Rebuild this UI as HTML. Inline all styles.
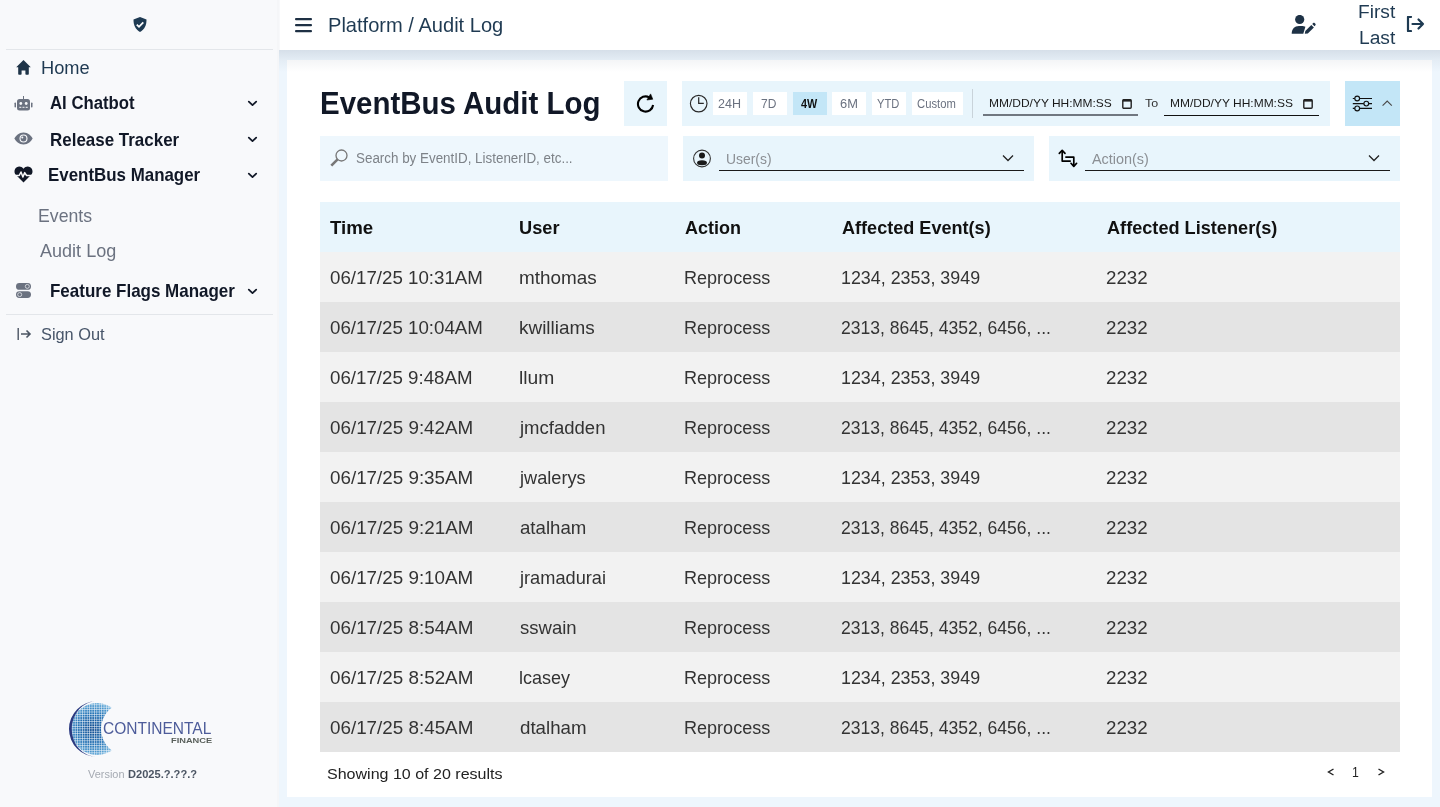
<!DOCTYPE html>
<html><head><meta charset="utf-8">
<style>
*{box-sizing:border-box;margin:0;padding:0}
html,body{width:1440px;height:807px;overflow:hidden}
body{font-family:"Liberation Sans",sans-serif;background:#eef6fd;position:relative}
.abs{position:absolute}
.t{position:absolute;white-space:nowrap;line-height:1;transform-origin:0 0}
#sb{position:absolute;left:0;top:0;width:279px;height:807px;background:#f8f9fb}
.hr{position:absolute;left:6px;width:267px;height:1px;background:#e3e6ea}
#hd{position:absolute;left:280px;top:0;width:1160px;height:50px;background:#fff}
#shadow{position:absolute;left:279px;top:50px;width:1161px;height:12px;background:linear-gradient(#d5dde6,#eef3f9)}
#card{position:absolute;left:287px;top:60px;width:1145px;height:737px;background:#fff}
.box{position:absolute;background:#e8f5fc}
.chip{position:absolute;top:92px;height:23px;background:#fff}
.row{position:absolute;left:320px;width:1080px;height:50px}
</style></head><body>
<div id="sb">
  <svg class="abs" style="left:132px;top:16px" width="16" height="17" viewBox="0 0 16 17"><path d="M8 1 L14.5 3.5 C14.5 9.5 12.5 13.5 8 16 C3.5 13.5 1.5 9.5 1.5 3.5 Z" fill="#1e3a52"/><path d="M4.8 8.6 L7 10.8 L11.3 6.3" stroke="#fff" stroke-width="1.8" fill="none"/></svg>
  <div class="hr" style="top:49px"></div>
  <svg class="abs" style="left:16px;top:60px" width="16" height="15" viewBox="0 0 16 15"><path d="M7.5 0 L14.8 7.3 L12.8 7.3 L12.8 14 Q12.8 14.8 12 14.8 L10.2 14.8 Q9.4 14.8 9.4 14 L9.4 10.6 L5.6 10.6 L5.6 14 Q5.6 14.8 4.8 14.8 L3 14.8 Q2.2 14.8 2.2 14 L2.2 7.3 L0.2 7.3 Z" fill="#1e3448"/></svg>
  <svg class="abs" style="left:14px;top:96px" width="19" height="15" viewBox="0 0 19 15"><rect x="3" y="3" width="13" height="11.5" rx="2.5" fill="#6b7280"/><rect x="9" y="0" width="1" height="3" fill="#6b7280"/><rect x="0.5" y="6.5" width="1.5" height="5" rx=".7" fill="#6b7280"/><rect x="17" y="6.5" width="1.5" height="5" rx=".7" fill="#6b7280"/><circle cx="6.8" cy="7.5" r="1.4" fill="#f8f9fb"/><circle cx="12.2" cy="7.5" r="1.4" fill="#f8f9fb"/><rect x="5.3" y="10.8" width="2" height="1" fill="#f8f9fb"/><rect x="8.5" y="10.8" width="2" height="1" fill="#f8f9fb"/><rect x="11.7" y="10.8" width="2" height="1" fill="#f8f9fb"/></svg>
  <svg class="abs" style="left:14px;top:132px" width="19" height="13" viewBox="0 0 19 13"><path d="M9.5 0.5 C14 0.5 17.5 3.8 18.5 6.5 C17.5 9.2 14 12.5 9.5 12.5 C5 12.5 1.5 9.2 0.5 6.5 C1.5 3.8 5 0.5 9.5 0.5 Z" fill="#6b7280"/><circle cx="9.5" cy="6.5" r="4" fill="#f8f9fb"/><circle cx="9.5" cy="6.5" r="2.9" fill="#6b7280"/><circle cx="8.3" cy="5.4" r="1" fill="#f8f9fb"/></svg>
  <svg class="abs" style="left:14px;top:166px" width="19" height="17" viewBox="0 0 19 17"><path d="M9.5 16.5 L1.8 8.8 C-0.3 6.7 0.2 2.6 2.8 1.2 C5.2 -0.2 7.8 0.6 9.5 2.8 C11.2 0.6 13.8 -0.2 16.2 1.2 C18.8 2.6 19.3 6.7 17.2 8.8 Z" fill="#111827"/><path d="M1 9.5 L5.2 9.5 L7 6 L8.9 11 L10.7 6.6 L12.6 9.5 L18.5 9.5" stroke="#f8f9fb" stroke-width="1.5" fill="none" stroke-linejoin="round"/></svg>
  <svg class="abs" style="left:16px;top:283px" width="15" height="15" viewBox="0 0 15 15"><rect x="0" y="0" width="15" height="6.8" rx="3.4" fill="#6b7280"/><rect x="0" y="8.2" width="15" height="6.8" rx="3.4" fill="#6b7280"/><circle cx="11.3" cy="3.4" r="2" fill="none" stroke="#e5e7eb" stroke-width=".8"/><circle cx="3.7" cy="11.6" r="2" fill="none" stroke="#e5e7eb" stroke-width=".8"/></svg>
  <svg class="abs" style="left:247px;top:99px" width="12" height="9" viewBox="0 0 12 9"><path d="M1.8 2.6 L5.5 6.2 L9.2 2.6" stroke="#111827" stroke-width="1.75" fill="none" stroke-linecap="round" stroke-linejoin="round"/></svg>
  <svg class="abs" style="left:247px;top:135px" width="12" height="9" viewBox="0 0 12 9"><path d="M1.8 2.6 L5.5 6.2 L9.2 2.6" stroke="#111827" stroke-width="1.75" fill="none" stroke-linecap="round" stroke-linejoin="round"/></svg>
  <svg class="abs" style="left:247px;top:171px" width="12" height="9" viewBox="0 0 12 9"><path d="M1.8 2.6 L5.5 6.2 L9.2 2.6" stroke="#111827" stroke-width="1.75" fill="none" stroke-linecap="round" stroke-linejoin="round"/></svg>
  <svg class="abs" style="left:247px;top:287px" width="12" height="9" viewBox="0 0 12 9"><path d="M1.8 2.6 L5.5 6.2 L9.2 2.6" stroke="#111827" stroke-width="1.75" fill="none" stroke-linecap="round" stroke-linejoin="round"/></svg>
  <div class="hr" style="top:314px"></div>
  <svg class="abs" style="left:17px;top:328px" width="15" height="12" viewBox="0 0 15 12"><rect x="0.5" y="0" width="1.4" height="12" fill="#4b5563"/><path d="M4 6 L13 6 M9.5 2.5 L13 6 L9.5 9.5" stroke="#4b5563" stroke-width="1.6" fill="none"/></svg>
  <svg class="abs" style="left:66px;top:698px" width="60" height="62" viewBox="0 0 60 62">
    <defs>
      <radialGradient id="lg" cx="0.42" cy="0.5" r="0.6"><stop offset="0" stop-color="#0f4a8e"/><stop offset="0.5" stop-color="#2574b6"/><stop offset="0.8" stop-color="#5aa3d4"/><stop offset="1" stop-color="#b0d8ef"/></radialGradient>
      <pattern id="mesh" width="2.4" height="2.4" patternUnits="userSpaceOnUse"><rect width="1.9" height="1.9" fill="#fff"/></pattern>
      <mask id="bite"><rect width="60" height="62" fill="#fff"/><circle cx="62" cy="31" r="27" fill="#000"/></mask>
      <mask id="dots"><rect width="60" height="62" fill="url(#mesh)"/></mask>
    </defs>
    <g mask="url(#bite)"><circle cx="31" cy="31" r="26" fill="url(#lg)" mask="url(#dots)"/></g>
    <path d="M31 3 A28 28 0 0 0 31 59 A25.3 28 0 0 1 31 3 Z" fill="#2b3a80"/>
  </svg>
</div>

<div class="abs" style="left:279px;top:0;width:1px;height:50px;background:#f8f9fb"></div>
<div class="abs" style="left:277px;top:0;width:2px;height:807px;background:#f5f6f8"></div>
<div id="hd">
  <svg class="abs" style="left:15px;top:17px" width="18" height="16" viewBox="0 0 18 16"><rect x="0" y="1" width="17" height="2.2" rx="1" fill="#1e3044"/><rect x="0" y="7" width="17" height="2.2" rx="1" fill="#1e3044"/><rect x="0" y="13" width="17" height="2.2" rx="1" fill="#1e3044"/></svg>
  <svg class="abs" style="left:1011px;top:15px" width="26" height="20" viewBox="0 0 26 20"><circle cx="8.7" cy="4.5" r="4.6" fill="#1e3246"/><path d="M0.7 18.8 C0.7 14 3.5 11 8 11 L10.5 11 C12 11 13.5 11.3 14.4 11.8 L12.3 18.8 Z" fill="#1e3246"/><path d="M13.8 18.8 L14.3 15.9 L20.3 9.9 L22.9 12.5 L16.8 18.5 Z" fill="#1e3246"/><path d="M21.2 9 L22.2 8 C22.6 7.6 23.2 7.6 23.6 8 L24.4 8.8 C24.8 9.2 24.8 9.8 24.4 10.2 L23.5 11.2 Z" fill="#1e3246"/></svg>
  <svg class="abs" style="left:1126px;top:16px" width="19" height="16" viewBox="0 0 19 16"><path d="M5 1 L2 1 L2 15 L5 15" stroke="#1e3a52" stroke-width="2.2" fill="none" stroke-linejoin="round" stroke-linecap="round"/><path d="M6.5 8 L17 8 M12.5 3.5 L17 8 L12.5 12.5" stroke="#1e3a52" stroke-width="2.2" fill="none" stroke-linecap="round" stroke-linejoin="round"/></svg>
</div>
<div id="card"></div>
<div class="abs" style="left:279px;top:50px;width:1161px;height:22px;background:linear-gradient(rgba(50,70,100,.13) 0px,rgba(50,70,100,.055) 10px,rgba(50,70,100,0) 22px)"></div>

<div class="box" style="left:624px;top:81px;width:43px;height:45px;background:#e8f5fc"></div>
<svg class="abs" style="left:635px;top:93px" width="20" height="20" viewBox="0 0 20 20"><path d="M18.1 12 A7.6 7.6 0 1 1 14.2 4.3" stroke="#000" stroke-width="2.1" fill="none"/><path d="M15.6 0.9 L17.8 6.2 L11.9 7 Z" fill="#000" stroke="#000" stroke-width=".6" stroke-linejoin="round"/></svg>

<div class="box" style="left:682px;top:81px;width:648px;height:45px"></div>
<svg class="abs" style="left:688px;top:93px" width="21" height="21" viewBox="0 0 21 21"><circle cx="10.7" cy="10.6" r="8.3" stroke="#2a2a2a" stroke-width="1.15" fill="none"/><path d="M10.7 4.3 L10.7 10.4 L15.8 10.4" stroke="#2a2a2a" stroke-width="1.25" fill="none"/></svg>
<div class="chip" style="left:713px;width:34px"></div>
<div class="chip" style="left:753px;width:34px"></div>
<div class="chip" style="left:793px;width:34px;background:#c3e6f7"></div>
<div class="chip" style="left:832px;width:34px"></div>
<div class="chip" style="left:872px;width:34px"></div>
<div class="chip" style="left:912px;width:51px"></div>
<div class="abs" style="left:972px;top:89px;width:1px;height:29px;background:#c9d3da"></div>
<svg class="abs" style="left:1122px;top:98px" width="10" height="11" viewBox="0 0 10 11"><rect x="0.8" y="1.8" width="8.4" height="8.4" rx="1" stroke="#222" stroke-width="1.4" fill="none"/><rect x="0.8" y="1.2" width="8.4" height="2.4" fill="#222"/></svg>
<div class="abs" style="left:983px;top:114px;width:155px;height:2px;background:#707780"></div>
<svg class="abs" style="left:1303px;top:98px" width="10" height="11" viewBox="0 0 10 11"><rect x="0.8" y="1.8" width="8.4" height="8.4" rx="1" stroke="#222" stroke-width="1.4" fill="none"/><rect x="0.8" y="1.2" width="8.4" height="2.4" fill="#222"/></svg>
<div class="abs" style="left:1164px;top:115px;width:155px;height:1px;background:#111"></div>

<div class="box" style="left:1345px;top:81px;width:55px;height:45px;background:#c3e6f7"></div>
<svg class="abs" style="left:1351px;top:95px" width="23" height="17" viewBox="0 0 23 17"><path d="M1.8 3.5 L21 3.5 M1.8 8.6 L21 8.6 M1.8 13.4 L21 13.4" stroke="#111" stroke-width="1.15"/><circle cx="6.2" cy="3.5" r="2.4" fill="#c3e6f7" stroke="#111" stroke-width="1.15"/><circle cx="15.3" cy="8.6" r="2.4" fill="#c3e6f7" stroke="#111" stroke-width="1.15"/><circle cx="6.2" cy="13.4" r="2.4" fill="#c3e6f7" stroke="#111" stroke-width="1.15"/></svg>
<svg class="abs" style="left:1381px;top:99px" width="12" height="8" viewBox="0 0 12 8"><path d="M1.6 6.6 L6.2 2.1 L10.8 6.6" stroke="#4a4a4a" stroke-width="1.15" fill="none"/></svg>

<div class="box" style="left:320px;top:136px;width:348px;height:45px;background:#eef7fd"></div>
<svg class="abs" style="left:329px;top:148px" width="20" height="20" viewBox="0 0 20 20"><circle cx="12.5" cy="7.5" r="5.5" stroke="#777" stroke-width="1.3" fill="none"/><path d="M8.6 11.4 L2.3 17.7" stroke="#777" stroke-width="2.6"/></svg>

<div class="box" style="left:683px;top:136px;width:351px;height:45px"></div>
<svg class="abs" style="left:690px;top:145px" width="28" height="28" viewBox="0 0 28 28"><circle cx="12" cy="13.5" r="8.4" stroke="#333" stroke-width="1.1" fill="none"/><circle cx="12" cy="10.6" r="3" fill="#1a1a1a"/><ellipse cx="12" cy="17.7" rx="5" ry="2.5" fill="#1a1a1a"/></svg>
<svg class="abs" style="left:1002px;top:154px" width="12" height="8" viewBox="0 0 12 8"><path d="M1 1.5 L6 6.5 L11 1.5" stroke="#222" stroke-width="1.3" fill="none"/></svg>
<div class="abs" style="left:719px;top:170px;width:305px;height:1px;background:#1a1a1a"></div>

<div class="box" style="left:1049px;top:136px;width:351px;height:45px"></div>
<svg class="abs" style="left:1054px;top:145px" width="28" height="28" viewBox="0 0 28 28"><path d="M8.2 5.8 L8.2 16.1 L16.8 16.1 M11.3 12.2 L19.8 12.2 L19.8 21" stroke="#000" stroke-width="1.7" fill="none" stroke-linejoin="round"/><path d="M5.3 8.4 L8.2 5.3 L11 8.4 M17 18.3 L19.8 21.4 L22.6 18.3" stroke="#000" stroke-width="1.7" fill="none" stroke-linecap="round" stroke-linejoin="round"/></svg>
<svg class="abs" style="left:1368px;top:154px" width="12" height="8" viewBox="0 0 12 8"><path d="M1 1.5 L6 6.5 L11 1.5" stroke="#222" stroke-width="1.3" fill="none"/></svg>
<div class="abs" style="left:1085px;top:170px;width:305px;height:1px;background:#1a1a1a"></div>

<div class="row" style="top:202px;background:#e8f5fc"></div>
<div class="row" style="top:252px;background:#f2f2f2"></div>
<div class="row" style="top:302px;background:#e4e4e4"></div>
<div class="row" style="top:352px;background:#f2f2f2"></div>
<div class="row" style="top:402px;background:#e4e4e4"></div>
<div class="row" style="top:452px;background:#f2f2f2"></div>
<div class="row" style="top:502px;background:#e4e4e4"></div>
<div class="row" style="top:552px;background:#f2f2f2"></div>
<div class="row" style="top:602px;background:#e4e4e4"></div>
<div class="row" style="top:652px;background:#f2f2f2"></div>
<div class="row" style="top:702px;background:#e4e4e4"></div>
<svg class="abs" style="left:1327px;top:768px" width="8" height="8" viewBox="0 0 8 8"><path d="M6.5 1 L1.5 4 L6.5 7" stroke="#222" stroke-width="1.4" fill="none"/></svg>
<svg class="abs" style="left:1377px;top:768px" width="8" height="8" viewBox="0 0 8 8"><path d="M1.5 1 L6.5 4 L1.5 7" stroke="#222" stroke-width="1.4" fill="none"/></svg>
<div class="t" style="left:41.14px;top:59.25px;font-size:18.02px;font-weight:normal;color:#1f3a52;transform:scaleX(1.0138);">Home</div>
<div class="t" style="left:50.36px;top:95.02px;font-size:17.46px;font-weight:bold;color:#111827;transform:scaleX(0.9597);">AI Chatbot</div>
<div class="t" style="left:49.73px;top:130.55px;font-size:18.02px;font-weight:bold;color:#111827;transform:scaleX(0.9412);">Release Tracker</div>
<div class="t" style="left:48.49px;top:166.43px;font-size:18.16px;font-weight:bold;color:#111827;transform:scaleX(0.9310);">EventBus Manager</div>
<div class="t" style="left:38.09px;top:207.29px;font-size:18.44px;font-weight:normal;color:#6b7280;transform:scaleX(0.9589);">Events</div>
<div class="t" style="left:39.50px;top:242.82px;font-size:17.46px;font-weight:normal;color:#6b7280;transform:scaleX(1.0345);">Audit Log</div>
<div class="t" style="left:49.73px;top:282.35px;font-size:18.02px;font-weight:bold;color:#111827;transform:scaleX(0.9423);">Feature Flags Manager</div>
<div class="t" style="left:41.45px;top:326.14px;font-size:17.32px;font-weight:normal;color:#475569;transform:scaleX(0.9441);">Sign Out</div>
<div class="t" style="left:103.22px;top:720.14px;font-size:17.32px;font-weight:normal;color:#4d5c9a;transform:scaleX(0.8963);">CONTINENTAL</div>
<div class="t" style="left:170.94px;top:737.44px;font-size:8.10px;font-weight:bold;color:#59605b;transform:scaleX(1.1444);">FINANCE</div>
<div class="t" style="left:88.30px;top:769.40px;font-size:10.75px;font-weight:normal;color:#a5aab2;transform:scaleX(1.0180);">Version</div>
<div class="t" style="left:127.83px;top:769.40px;font-size:10.75px;font-weight:bold;color:#4b5563;transform:scaleX(1.0314);">D2025.?.??.?</div>
<div class="t" style="left:327.59px;top:16.07px;font-size:19.41px;font-weight:normal;color:#1f3a52;transform:scaleX(1.0349);">Platform / Audit Log</div>
<div class="t" style="left:1358.27px;top:2.86px;font-size:18.72px;font-weight:normal;color:#1f3a52;transform:scaleX(1.0251);">First</div>
<div class="t" style="left:1359.26px;top:28.98px;font-size:18.58px;font-weight:normal;color:#1f3a52;transform:scaleX(1.0337);">Last</div>
<div class="t" style="left:320.23px;top:88.24px;font-size:31.08px;font-weight:bold;color:#111827;transform:scaleX(0.9482);">EventBus Audit Log</div>
<div class="t" style="left:718.12px;top:98.46px;font-size:12.22px;font-weight:normal;color:#6b7280;transform:scaleX(1.0251);">24H</div>
<div class="t" style="left:761.40px;top:98.46px;font-size:12.22px;font-weight:normal;color:#6b7280;transform:scaleX(0.9831);">7D</div>
<div class="t" style="left:800.69px;top:98.46px;font-size:12.22px;font-weight:bold;color:#111;transform:scaleX(0.8860);">4W</div>
<div class="t" style="left:840.06px;top:98.46px;font-size:12.22px;font-weight:normal;color:#6b7280;transform:scaleX(1.0534);">6M</div>
<div class="t" style="left:877.38px;top:98.46px;font-size:12.22px;font-weight:normal;color:#6b7280;transform:scaleX(0.9121);">YTD</div>
<div class="t" style="left:917.14px;top:98.46px;font-size:12.22px;font-weight:normal;color:#6b7280;transform:scaleX(0.9209);">Custom</div>
<div class="t" style="left:988.94px;top:98.49px;font-size:11.59px;font-weight:normal;color:#1a1a1a;transform:scaleX(1.0341);">MM/DD/YY HH:MM:SS</div>
<div class="t" style="left:1144.65px;top:98.49px;font-size:11.59px;font-weight:normal;color:#333;transform:scaleX(1.0783);">To</div>
<div class="t" style="left:1169.94px;top:98.49px;font-size:11.59px;font-weight:normal;color:#1a1a1a;transform:scaleX(1.0349);">MM/DD/YY HH:MM:SS</div>
<div class="t" style="left:356.16px;top:151.39px;font-size:14.66px;font-weight:normal;color:#7d8288;transform:scaleX(0.9137);">Search by EventID, ListenerID, etc...</div>
<div class="t" style="left:725.73px;top:152.22px;font-size:14.39px;font-weight:normal;color:#8b8f94;transform:scaleX(0.9675);">User(s)</div>
<div class="t" style="left:1092.20px;top:152.22px;font-size:14.39px;font-weight:normal;color:#8b8f94;transform:scaleX(1.0019);">Action(s)</div>
<div class="t" style="left:330.41px;top:217.72px;font-size:18.99px;font-weight:bold;color:#111;transform:scaleX(0.9838);">Time</div>
<div class="t" style="left:518.91px;top:217.72px;font-size:18.99px;font-weight:bold;color:#111;transform:scaleX(0.9591);">User</div>
<div class="t" style="left:684.64px;top:217.72px;font-size:18.99px;font-weight:bold;color:#111;transform:scaleX(0.9470);">Action</div>
<div class="t" style="left:841.74px;top:217.72px;font-size:18.99px;font-weight:bold;color:#111;transform:scaleX(0.9522);">Affected Event(s)</div>
<div class="t" style="left:1106.94px;top:217.72px;font-size:18.99px;font-weight:bold;color:#111;transform:scaleX(0.9556);">Affected Listener(s)</div>
<div class="t" style="left:330.04px;top:269.05px;font-size:18.02px;font-weight:normal;color:#333;transform:scaleX(1.0386);">06/17/25 10:31AM</div>
<div class="t" style="left:519.17px;top:269.05px;font-size:18.02px;font-weight:normal;color:#333;transform:scaleX(1.0487);">mthomas</div>
<div class="t" style="left:683.56px;top:269.05px;font-size:18.02px;font-weight:normal;color:#333;transform:scaleX(1.0014);">Reprocess</div>
<div class="t" style="left:840.85px;top:269.05px;font-size:18.02px;font-weight:normal;color:#333;transform:scaleX(0.9915);">1234, 2353, 3949</div>
<div class="t" style="left:1106.36px;top:269.05px;font-size:18.02px;font-weight:normal;color:#333;transform:scaleX(1.0405);">2232</div>
<div class="t" style="left:330.04px;top:319.05px;font-size:18.02px;font-weight:normal;color:#333;transform:scaleX(1.0386);">06/17/25 10:04AM</div>
<div class="t" style="left:519.16px;top:319.05px;font-size:18.02px;font-weight:normal;color:#333;transform:scaleX(1.0505);">kwilliams</div>
<div class="t" style="left:683.56px;top:319.05px;font-size:18.02px;font-weight:normal;color:#333;transform:scaleX(1.0014);">Reprocess</div>
<div class="t" style="left:841.22px;top:319.05px;font-size:18.02px;font-weight:normal;color:#333;transform:scaleX(0.9746);">2313, 8645, 4352, 6456, ...</div>
<div class="t" style="left:1106.36px;top:319.05px;font-size:18.02px;font-weight:normal;color:#333;transform:scaleX(1.0405);">2232</div>
<div class="t" style="left:330.04px;top:369.05px;font-size:18.02px;font-weight:normal;color:#333;transform:scaleX(1.0386);">06/17/25 9:48AM</div>
<div class="t" style="left:519.14px;top:369.05px;font-size:18.02px;font-weight:normal;color:#333;transform:scaleX(1.0708);">llum</div>
<div class="t" style="left:683.56px;top:369.05px;font-size:18.02px;font-weight:normal;color:#333;transform:scaleX(1.0014);">Reprocess</div>
<div class="t" style="left:840.85px;top:369.05px;font-size:18.02px;font-weight:normal;color:#333;transform:scaleX(0.9915);">1234, 2353, 3949</div>
<div class="t" style="left:1106.36px;top:369.05px;font-size:18.02px;font-weight:normal;color:#333;transform:scaleX(1.0405);">2232</div>
<div class="t" style="left:330.04px;top:419.05px;font-size:18.02px;font-weight:normal;color:#333;transform:scaleX(1.0438);">06/17/25 9:42AM</div>
<div class="t" style="left:520.16px;top:419.05px;font-size:18.02px;font-weight:normal;color:#333;transform:scaleX(1.0284);">jmcfadden</div>
<div class="t" style="left:683.56px;top:419.05px;font-size:18.02px;font-weight:normal;color:#333;transform:scaleX(1.0014);">Reprocess</div>
<div class="t" style="left:841.22px;top:419.05px;font-size:18.02px;font-weight:normal;color:#333;transform:scaleX(0.9746);">2313, 8645, 4352, 6456, ...</div>
<div class="t" style="left:1106.36px;top:419.05px;font-size:18.02px;font-weight:normal;color:#333;transform:scaleX(1.0405);">2232</div>
<div class="t" style="left:330.04px;top:469.05px;font-size:18.02px;font-weight:normal;color:#333;transform:scaleX(1.0438);">06/17/25 9:35AM</div>
<div class="t" style="left:520.14px;top:469.05px;font-size:18.02px;font-weight:normal;color:#333;transform:scaleX(1.0081);">jwalerys</div>
<div class="t" style="left:683.56px;top:469.05px;font-size:18.02px;font-weight:normal;color:#333;transform:scaleX(1.0014);">Reprocess</div>
<div class="t" style="left:840.85px;top:469.05px;font-size:18.02px;font-weight:normal;color:#333;transform:scaleX(0.9915);">1234, 2353, 3949</div>
<div class="t" style="left:1106.36px;top:469.05px;font-size:18.02px;font-weight:normal;color:#333;transform:scaleX(1.0405);">2232</div>
<div class="t" style="left:330.04px;top:519.05px;font-size:18.02px;font-weight:normal;color:#333;transform:scaleX(1.0453);">06/17/25 9:21AM</div>
<div class="t" style="left:519.55px;top:519.05px;font-size:18.02px;font-weight:normal;color:#333;transform:scaleX(1.0347);">atalham</div>
<div class="t" style="left:683.56px;top:519.05px;font-size:18.02px;font-weight:normal;color:#333;transform:scaleX(1.0014);">Reprocess</div>
<div class="t" style="left:841.22px;top:519.05px;font-size:18.02px;font-weight:normal;color:#333;transform:scaleX(0.9746);">2313, 8645, 4352, 6456, ...</div>
<div class="t" style="left:1106.36px;top:519.05px;font-size:18.02px;font-weight:normal;color:#333;transform:scaleX(1.0405);">2232</div>
<div class="t" style="left:330.04px;top:569.05px;font-size:18.02px;font-weight:normal;color:#333;transform:scaleX(1.0438);">06/17/25 9:10AM</div>
<div class="t" style="left:520.15px;top:569.05px;font-size:18.02px;font-weight:normal;color:#333;transform:scaleX(1.0102);">jramadurai</div>
<div class="t" style="left:683.56px;top:569.05px;font-size:18.02px;font-weight:normal;color:#333;transform:scaleX(1.0014);">Reprocess</div>
<div class="t" style="left:840.85px;top:569.05px;font-size:18.02px;font-weight:normal;color:#333;transform:scaleX(0.9915);">1234, 2353, 3949</div>
<div class="t" style="left:1106.36px;top:569.05px;font-size:18.02px;font-weight:normal;color:#333;transform:scaleX(1.0405);">2232</div>
<div class="t" style="left:330.04px;top:619.05px;font-size:18.02px;font-weight:normal;color:#333;transform:scaleX(1.0445);">06/17/25 8:54AM</div>
<div class="t" style="left:519.93px;top:619.05px;font-size:18.02px;font-weight:normal;color:#333;transform:scaleX(1.0280);">sswain</div>
<div class="t" style="left:683.56px;top:619.05px;font-size:18.02px;font-weight:normal;color:#333;transform:scaleX(1.0014);">Reprocess</div>
<div class="t" style="left:841.22px;top:619.05px;font-size:18.02px;font-weight:normal;color:#333;transform:scaleX(0.9746);">2313, 8645, 4352, 6456, ...</div>
<div class="t" style="left:1106.36px;top:619.05px;font-size:18.02px;font-weight:normal;color:#333;transform:scaleX(1.0405);">2232</div>
<div class="t" style="left:330.04px;top:669.05px;font-size:18.02px;font-weight:normal;color:#333;transform:scaleX(1.0445);">06/17/25 8:52AM</div>
<div class="t" style="left:519.22px;top:669.05px;font-size:18.02px;font-weight:normal;color:#333;transform:scaleX(1.0003);">lcasey</div>
<div class="t" style="left:683.56px;top:669.05px;font-size:18.02px;font-weight:normal;color:#333;transform:scaleX(1.0014);">Reprocess</div>
<div class="t" style="left:840.85px;top:669.05px;font-size:18.02px;font-weight:normal;color:#333;transform:scaleX(0.9915);">1234, 2353, 3949</div>
<div class="t" style="left:1106.36px;top:669.05px;font-size:18.02px;font-weight:normal;color:#333;transform:scaleX(1.0405);">2232</div>
<div class="t" style="left:330.04px;top:719.05px;font-size:18.02px;font-weight:normal;color:#333;transform:scaleX(1.0445);">06/17/25 8:45AM</div>
<div class="t" style="left:519.55px;top:719.05px;font-size:18.02px;font-weight:normal;color:#333;transform:scaleX(1.0395);">dtalham</div>
<div class="t" style="left:683.56px;top:719.05px;font-size:18.02px;font-weight:normal;color:#333;transform:scaleX(1.0014);">Reprocess</div>
<div class="t" style="left:841.22px;top:719.05px;font-size:18.02px;font-weight:normal;color:#333;transform:scaleX(0.9746);">2313, 8645, 4352, 6456, ...</div>
<div class="t" style="left:1106.36px;top:719.05px;font-size:18.02px;font-weight:normal;color:#333;transform:scaleX(1.0405);">2232</div>
<div class="t" style="left:326.96px;top:765.58px;font-size:15.50px;font-weight:normal;color:#222;transform:scaleX(1.0339);">Showing 10 of 20 results</div>
<div class="t" style="left:1352.14px;top:765.58px;font-size:13.97px;font-weight:normal;color:#222;transform:scaleX(0.8787);">1</div>
</body></html>
